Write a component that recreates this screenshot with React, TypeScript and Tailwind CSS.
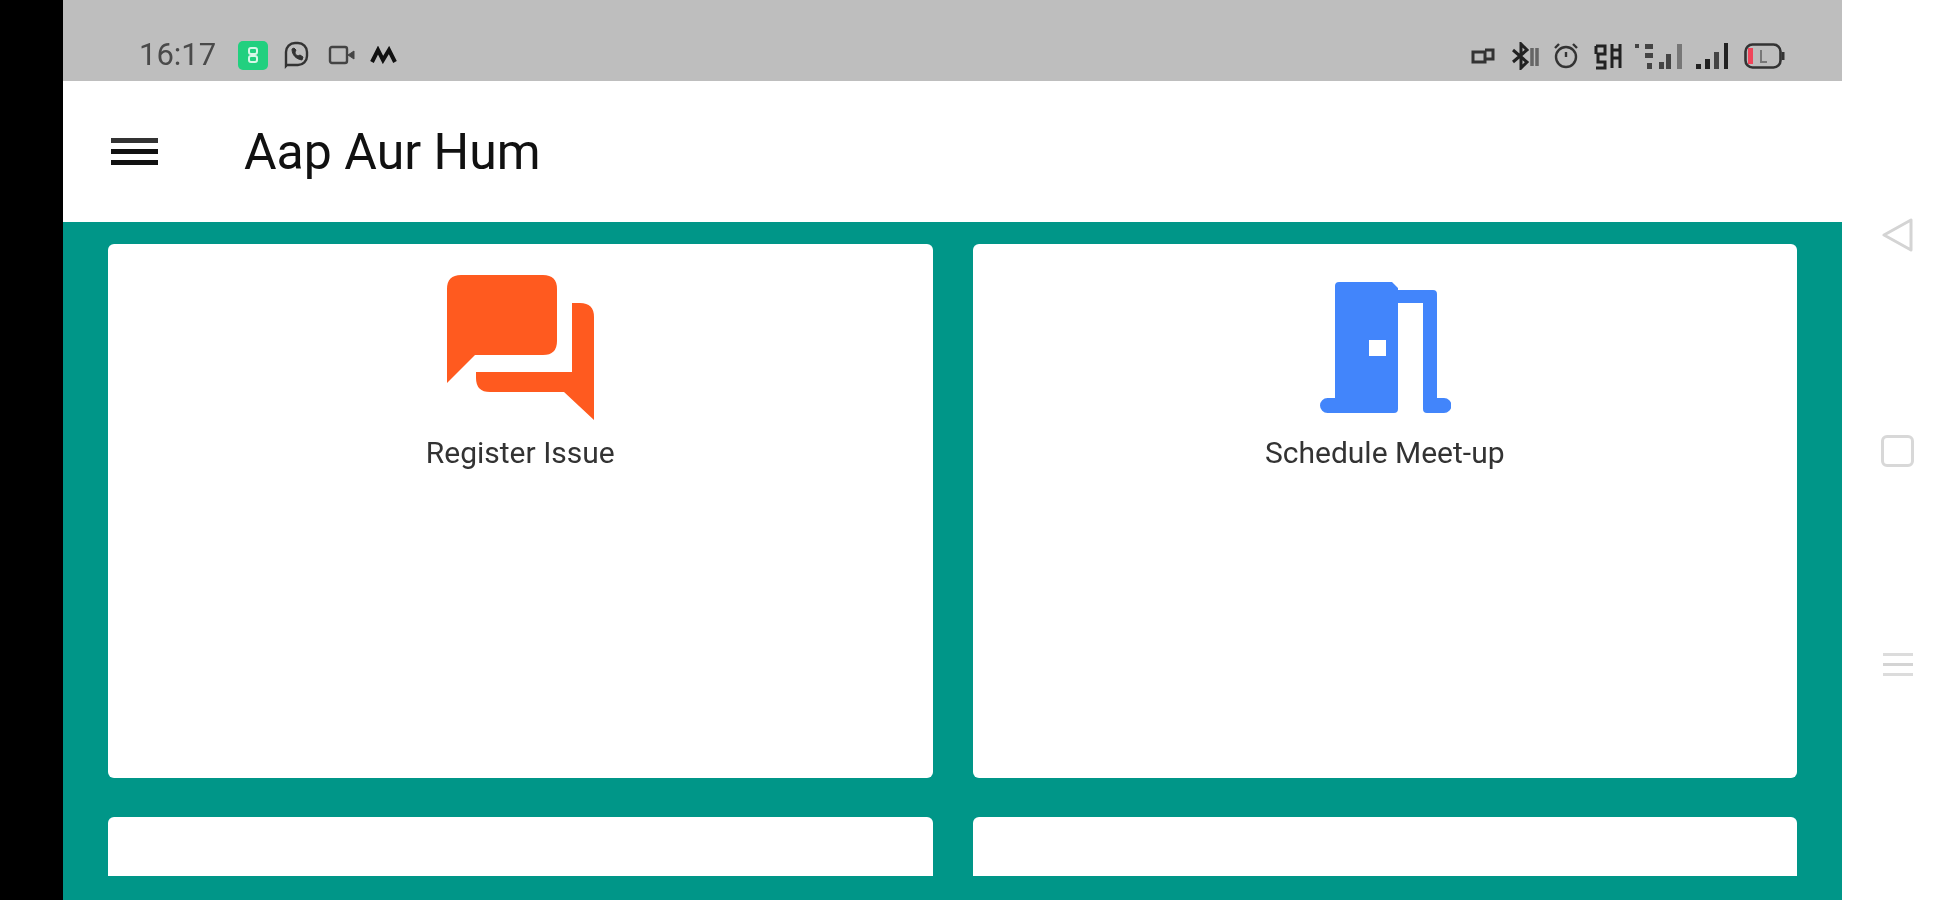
import React from "react";

const font = "font-['Roboto',sans-serif]";

function ChatIcon() {
  return (
    <svg className="ml-[1px] blur-[0.5px]" width="147" height="145" viewBox="0 0 147 145" fill="#ff5a1f">
      <path d="M14 0H96Q110 0 110 14V66Q110 80 96 80H28L0 108V14Q0 0 14 0Z" />
      <path d="M125 28H133Q147 28 147 42V145L117 117H43Q29 117 29 103V97H125Z" />
    </svg>
  );
}

function DoorIcon() {
  return (
    <svg className="ml-[1px] blur-[0.5px]" width="131" height="131" viewBox="0 0 131 131" fill="#4285fb">
      <path
        fillRule="evenodd"
        d="M19 0H72L78 6V8H113Q117 8 117 12V116H124A7.5 7.5 0 0 1 124 131H107Q103 131 103 127V21H78V127Q78 131 74 131H7.5A7.5 7.5 0 0 1 7.5 116H15V4Q15 0 19 0ZM49 58V74H66V58Z"
      />
    </svg>
  );
}

function LeftStatusIcons() {
  return (
    <div className="flex items-center blur-[0.7px]">
      {/* green app badge */}
      <div className="ml-[22px] flex h-[29px] w-[30px] items-center justify-center rounded-[5px] bg-[#22d07f]">
        <svg width="12" height="18" viewBox="0 0 12 18" fill="none" stroke="#d8f7e8" strokeWidth="2">
          <rect x="2" y="2" width="8" height="6" rx="2" />
          <rect x="2" y="10" width="8" height="6" rx="2" />
        </svg>
      </div>
      {/* whatsapp */}
      <svg className="ml-[15px]" width="26" height="28" viewBox="0 0 26 28" fill="none" stroke="#333" strokeWidth="2.4">
        <path d="M3 25V11A9 9 0 0 1 12 2H15A9 9 0 0 1 24 11V15A9 9 0 0 1 15 24H4Z" />
        <path d="M9 8C9 14 13 18 19 19L20 16L17 14L15 15C13 14 12 13 12 11L13 9L11 7Z" fill="#333" strokeWidth="1" />
      </svg>
      {/* video */}
      <svg className="ml-[19px]" width="27" height="20" viewBox="0 0 27 20" fill="none" stroke="#444" strokeWidth="2.4">
        <rect x="2" y="2" width="17" height="16" rx="2" />
        <path d="M20 10L26 6V14Z" fill="#444" strokeWidth="1" />
      </svg>
      {/* M logo */}
      <svg className="ml-[15px]" width="27" height="18" viewBox="0 0 27 18" fill="none" stroke="#111" strokeWidth="4">
        <path d="M2 16L8 4L13 14L19 4L25 16" />
      </svg>
    </div>
  );
}

function RightStatusIcons() {
  return (
    <div className="flex items-center blur-[0.7px]">
      <svg width="24" height="20" viewBox="0 0 24 20" fill="none" stroke="#333" strokeWidth="3">
        <path d="M2 6H14V16H2ZM14 4H22V13H14" />
      </svg>
      <svg className="ml-[16px]" width="30" height="28" viewBox="0 0 30 28" fill="none" stroke="#222" strokeWidth="3">
        <path d="M2 8L16 20L10 26V2L16 8L2 20" />
        <path d="M21 6V24M26 6V24" stroke="#666" strokeWidth="3.5" />
      </svg>
      <svg className="ml-[12px]" width="26" height="28" viewBox="0 0 26 28" fill="none" stroke="#333" strokeWidth="2.4">
        <circle cx="13" cy="15" r="10" />
        <path d="M13 10V15M2 6L6 2M24 6L20 2" />
      </svg>
      <svg className="ml-[15px]" width="29" height="28" viewBox="0 0 29 28" fill="none" stroke="#222" strokeWidth="3">
        <path d="M2 4H11V12H4V20H11V26H2M2 4V12M11 20V26M18 2V26M26 2V26M18 8H26M18 16H26" />
      </svg>
      <svg className="ml-[12px]" width="49" height="28" viewBox="0 0 49 28" fill="#444">
        <rect x="0" y="2" width="4" height="4" />
        <rect x="10" y="2" width="8" height="5" />
        <rect x="10" y="11" width="8" height="5" />
        <rect x="12" y="21" width="5" height="6" />
        <rect x="24" y="20" width="5" height="7" />
        <rect x="31" y="12" width="5" height="15" />
        <rect x="42" y="2" width="5" height="25" fill="#777" />
      </svg>
      <svg className="ml-[12px]" width="33" height="28" viewBox="0 0 33 28" fill="#222">
        <rect x="0" y="22" width="5" height="5" />
        <rect x="9" y="17" width="5" height="10" />
        <rect x="18" y="10" width="5" height="17" fill="#444" />
        <rect x="28" y="1" width="4" height="26" />
      </svg>
      <svg className="ml-[15px]" width="41" height="26" viewBox="0 0 41 26" fill="none">
        <rect x="1.5" y="1.5" width="35" height="23" rx="7" stroke="#333" strokeWidth="2.6" />
        <rect x="4" y="5" width="5" height="16" fill="#f0455a" />
        <path d="M39 9V17" stroke="#333" strokeWidth="3" />
        <path d="M17 7V19H23" stroke="#777" strokeWidth="2" />
      </svg>
    </div>
  );
}

function Card({ label, children }: { label: string; children: React.ReactNode }) {
  return (
    <div className="flex h-[534px] flex-col items-center rounded-md bg-white pt-[31px]">
      <div className="flex h-[145px] items-center">{children}</div>
      <div className="mt-[15px] text-[30px] leading-[36px] text-[#333] blur-[0.7px]">{label}</div>
    </div>
  );
}

export default function App() {
  return (
    <div className={`flex h-[900px] overflow-hidden bg-white ${font}`}>
      <div className="w-[63px] bg-black" />

      <div className="flex w-[1779px] flex-col">
        {/* status bar */}
        <div className="flex h-[81px] items-end justify-between bg-[#bebebe] pb-[11px] pl-[76px] pr-[57px]">
          <div className="flex items-center">
            <span className="text-[31px] leading-[30px] text-[#4a4a4a] blur-[0.7px]">16:17</span>
            <LeftStatusIcons />
          </div>
          <RightStatusIcons />
        </div>

        {/* app bar */}
        <div className="flex h-[141px] items-center bg-white pl-[48px]">
          <div className="flex w-[47px] flex-col gap-[6px] blur-[0.5px]">
            <div className="h-[5px] bg-[#333]" />
            <div className="h-[5px] bg-[#111]" />
            <div className="h-[5px] bg-[#111]" />
          </div>
          <h1 className="ml-[86px] text-[50px] font-normal leading-none text-[#111] blur-[0.6px]">Aap Aur Hum</h1>
        </div>

        {/* dashboard grid */}
        <div className="grid flex-1 grid-cols-2 content-start gap-x-[40px] gap-y-[39px] bg-[#009688] px-[45px] pt-[22px]">
          <Card label="Register Issue">
            <ChatIcon />
          </Card>
          <Card label="Schedule Meet-up">
            <DoorIcon />
          </Card>
          <div className="h-[59px] rounded-t-md bg-white" />
          <div className="h-[59px] rounded-t-md bg-white" />
        </div>
      </div>

      {/* navigation gestures */}
      <div className="flex flex-1 flex-col items-center bg-white pt-[218px] blur-[0.6px]">
        <svg width="32" height="34" viewBox="0 0 32 34" fill="none" stroke="#d4d4d4" strokeWidth="3" strokeLinejoin="round">
          <path d="M29 2V32L2 17Z" />
        </svg>
        <div className="mt-[183px] h-[32px] w-[33px] rounded-[6px] border-[3px] border-[#d8d8d8]" />
        <div className="mt-[186px] flex w-[30px] flex-col gap-[7px]">
          <div className="h-[3px] bg-[#dcdcdc]" />
          <div className="h-[3px] bg-[#d4d4d4]" />
          <div className="h-[3px] bg-[#dcdcdc]" />
        </div>
      </div>
    </div>
  );
}
